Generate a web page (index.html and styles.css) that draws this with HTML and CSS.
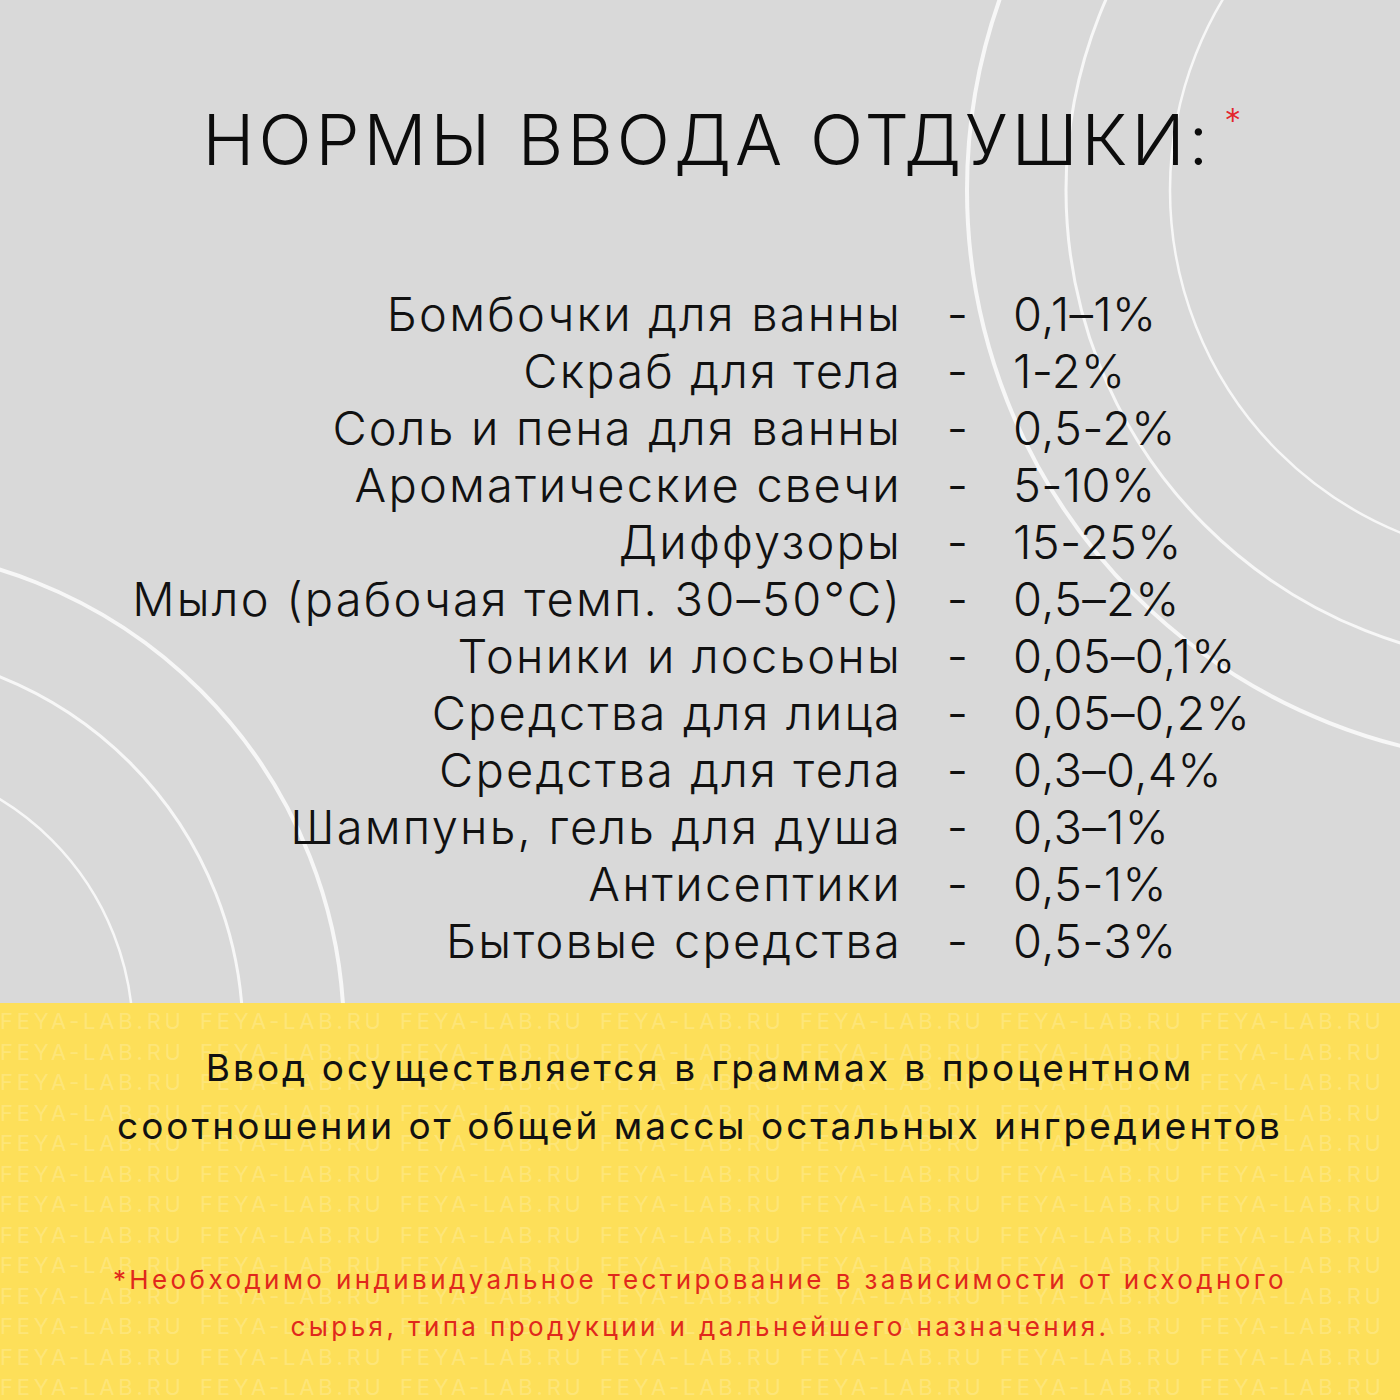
FILE: index.html
```html
<!DOCTYPE html>
<html lang="ru">
<head>
<meta charset="utf-8">
<title>Нормы ввода отдушки</title>
<link rel="stylesheet" href="styles.css">
</head>
<body>
<div class="page">
  <section class="top">
    <svg class="deco" viewBox="0 0 1400 1003" width="1400" height="1003" aria-hidden="true">
      <g fill="none" stroke="#f7f7f7">
        <circle cx="1540" cy="190" r="370" stroke-width="2.5"/>
        <circle cx="1540" cy="190" r="474" stroke-width="3"/>
        <circle cx="1540" cy="190" r="573" stroke-width="4"/>
        <circle cx="-144" cy="1036" r="277" stroke-width="2.5"/>
        <circle cx="-144" cy="1036" r="387" stroke-width="3"/>
        <circle cx="-144" cy="1036" r="488" stroke-width="4"/>
      </g>
    </svg>
    <h1 class="title">НОРМЫ ВВОДА ОТДУШКИ:<span class="star">*</span></h1>
    <div class="table">
      <div class="name">Бомбочки для ванны</div><div class="dash">-</div><div class="val">0,1–1%</div>
      <div class="name">Скраб для тела</div><div class="dash">-</div><div class="val">1-2%</div>
      <div class="name">Соль и пена для ванны</div><div class="dash">-</div><div class="val">0,5-2%</div>
      <div class="name">Ароматические свечи</div><div class="dash">-</div><div class="val">5-10%</div>
      <div class="name">Диффузоры</div><div class="dash">-</div><div class="val">15-25%</div>
      <div class="name">Мыло (рабочая темп. 30–50°C)</div><div class="dash">-</div><div class="val">0,5–2%</div>
      <div class="name">Тоники и лосьоны</div><div class="dash">-</div><div class="val">0,05–0,1%</div>
      <div class="name">Средства для лица</div><div class="dash">-</div><div class="val">0,05–0,2%</div>
      <div class="name">Средства для тела</div><div class="dash">-</div><div class="val">0,3–0,4%</div>
      <div class="name">Шампунь, гель для душа</div><div class="dash">-</div><div class="val">0,3–1%</div>
      <div class="name">Антисептики</div><div class="dash">-</div><div class="val">0,5-1%</div>
      <div class="name">Бытовые средства</div><div class="dash">-</div><div class="val">0,5-3%</div>
    </div>
  </section>
  <section class="band">
    <div class="watermark" aria-hidden="true">
      <div class="wm-row"><span>FEYA-LAB.RU</span><span>FEYA-LAB.RU</span><span>FEYA-LAB.RU</span><span>FEYA-LAB.RU</span><span>FEYA-LAB.RU</span><span>FEYA-LAB.RU</span><span>FEYA-LAB.RU</span></div>
      <div class="wm-row"><span>FEYA-LAB.RU</span><span>FEYA-LAB.RU</span><span>FEYA-LAB.RU</span><span>FEYA-LAB.RU</span><span>FEYA-LAB.RU</span><span>FEYA-LAB.RU</span><span>FEYA-LAB.RU</span></div>
      <div class="wm-row"><span>FEYA-LAB.RU</span><span>FEYA-LAB.RU</span><span>FEYA-LAB.RU</span><span>FEYA-LAB.RU</span><span>FEYA-LAB.RU</span><span>FEYA-LAB.RU</span><span>FEYA-LAB.RU</span></div>
      <div class="wm-row"><span>FEYA-LAB.RU</span><span>FEYA-LAB.RU</span><span>FEYA-LAB.RU</span><span>FEYA-LAB.RU</span><span>FEYA-LAB.RU</span><span>FEYA-LAB.RU</span><span>FEYA-LAB.RU</span></div>
      <div class="wm-row"><span>FEYA-LAB.RU</span><span>FEYA-LAB.RU</span><span>FEYA-LAB.RU</span><span>FEYA-LAB.RU</span><span>FEYA-LAB.RU</span><span>FEYA-LAB.RU</span><span>FEYA-LAB.RU</span></div>
      <div class="wm-row"><span>FEYA-LAB.RU</span><span>FEYA-LAB.RU</span><span>FEYA-LAB.RU</span><span>FEYA-LAB.RU</span><span>FEYA-LAB.RU</span><span>FEYA-LAB.RU</span><span>FEYA-LAB.RU</span></div>
      <div class="wm-row"><span>FEYA-LAB.RU</span><span>FEYA-LAB.RU</span><span>FEYA-LAB.RU</span><span>FEYA-LAB.RU</span><span>FEYA-LAB.RU</span><span>FEYA-LAB.RU</span><span>FEYA-LAB.RU</span></div>
      <div class="wm-row"><span>FEYA-LAB.RU</span><span>FEYA-LAB.RU</span><span>FEYA-LAB.RU</span><span>FEYA-LAB.RU</span><span>FEYA-LAB.RU</span><span>FEYA-LAB.RU</span><span>FEYA-LAB.RU</span></div>
      <div class="wm-row"><span>FEYA-LAB.RU</span><span>FEYA-LAB.RU</span><span>FEYA-LAB.RU</span><span>FEYA-LAB.RU</span><span>FEYA-LAB.RU</span><span>FEYA-LAB.RU</span><span>FEYA-LAB.RU</span></div>
      <div class="wm-row"><span>FEYA-LAB.RU</span><span>FEYA-LAB.RU</span><span>FEYA-LAB.RU</span><span>FEYA-LAB.RU</span><span>FEYA-LAB.RU</span><span>FEYA-LAB.RU</span><span>FEYA-LAB.RU</span></div>
      <div class="wm-row"><span>FEYA-LAB.RU</span><span>FEYA-LAB.RU</span><span>FEYA-LAB.RU</span><span>FEYA-LAB.RU</span><span>FEYA-LAB.RU</span><span>FEYA-LAB.RU</span><span>FEYA-LAB.RU</span></div>
      <div class="wm-row"><span>FEYA-LAB.RU</span><span>FEYA-LAB.RU</span><span>FEYA-LAB.RU</span><span>FEYA-LAB.RU</span><span>FEYA-LAB.RU</span><span>FEYA-LAB.RU</span><span>FEYA-LAB.RU</span></div>
      <div class="wm-row"><span>FEYA-LAB.RU</span><span>FEYA-LAB.RU</span><span>FEYA-LAB.RU</span><span>FEYA-LAB.RU</span><span>FEYA-LAB.RU</span><span>FEYA-LAB.RU</span><span>FEYA-LAB.RU</span></div>
    </div>
    <p class="lead">Ввод осуществляется в граммах в процентном<br>соотношении от общей массы остальных ингредиентов</p>
    <p class="note">*Необходимо индивидуальное тестирование в зависимости от исходного<br>сырья, типа продукции и дальнейшего назначения.</p>
  </section>
</div>
</body>
</html>
```
FILE: styles.css
```css
* { box-sizing: border-box; }
html, body { margin: 0; padding: 0; }
body { background: #d9d9d9; font-family: Inter, "Open Sans", "DejaVu Sans", sans-serif; color: #111; }

.page { width: 1400px; height: 1400px; overflow: hidden; }

.top {
  position: relative;
  height: 1003px;
  background: #d9d9d9;
  padding-top: 105px;
}
.deco { position: absolute; left: 0; top: 0; }

.title {
  position: relative;
  margin: 0;
  text-align: center;
  font-size: 70px;
  line-height: 70px;
  font-weight: 300;
  letter-spacing: 4px;
  color: #0c0c0c;
  padding-left: 44px;
}
.star {
  position: relative;
  top: -32px;
  margin-left: 12px;
  font-size: 34px;
  color: #e3262b;
  letter-spacing: 0;
}

.table {
  position: relative;
  margin-top: 97px;
  display: grid;
  grid-template-columns: 902px 111px 1fr;
  font-size: 47px;
  line-height: 57px;
  font-weight: 300;
  color: #111;
}
.name { text-align: right; letter-spacing: 2.2px; }
.dash { text-align: center; }
.val { text-align: left; letter-spacing: 0.3px; }

.band {
  position: relative;
  height: 397px;
  background: #fddf59;
  padding-top: 36px;
  text-align: center;
}
.watermark {
  position: absolute;
  left: 0; top: 3px; right: 0; bottom: 0;
  overflow: hidden;
  font-size: 22px;
  line-height: 30.5px;
  letter-spacing: 3.8px;
  color: rgba(255, 255, 255, 0.2);
  white-space: nowrap;
}
.wm-row { display: flex; }
.wm-row span { flex: 0 0 200px; text-align: left; }

.lead {
  position: relative;
  margin: 0;
  font-size: 37px;
  line-height: 58px;
  font-weight: 400;
  letter-spacing: 3px;
  color: #111;
}
.note {
  position: relative;
  margin: 101px 0 0;
  font-size: 26px;
  line-height: 47px;
  font-weight: 400;
  color: #e0281c;
  letter-spacing: 3.4px;
}
```
